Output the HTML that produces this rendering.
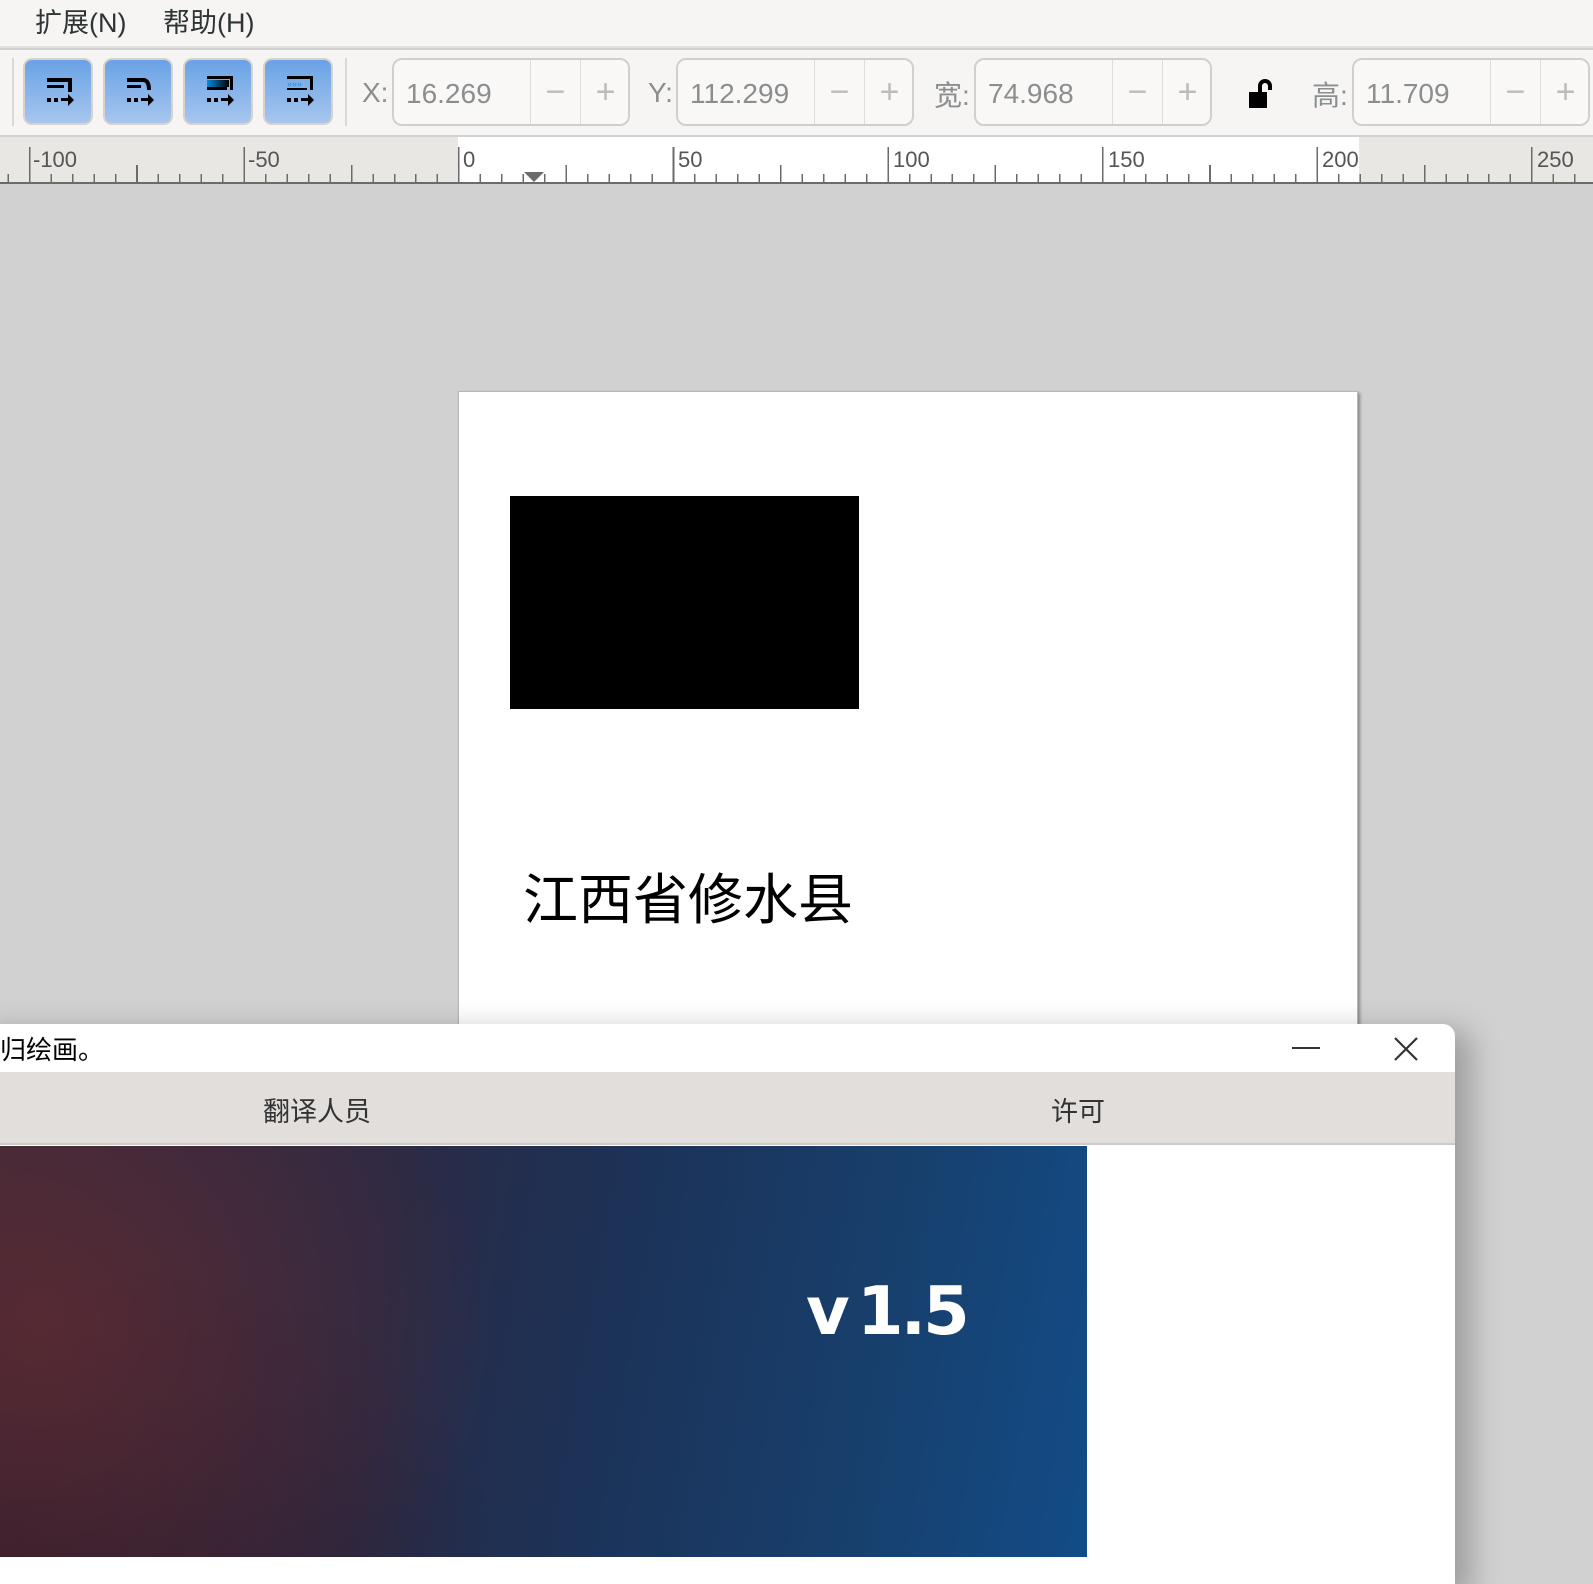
<!DOCTYPE html>
<html><head><meta charset="utf-8"><style>
*{margin:0;padding:0;box-sizing:border-box}
body{width:1593px;height:1557px;overflow:hidden;background:#d1d1d1;position:relative;font-family:"Liberation Sans","Noto Sans CJK SC",sans-serif}
.abs{position:absolute}
#menu{left:0;top:0;width:1593px;height:48px;background:#f6f5f4;border-bottom:2px solid #e2e0dd;font-size:27px;color:#2e3436}
#menu span{position:absolute;top:1px}
#tb{left:0;top:50px;width:1593px;height:86px;background:#f6f5f4;border-bottom:1px solid #d5d2ce}
.btn{position:absolute;top:8px;width:70px;height:67px;border-radius:9px;border:2px solid #d8d2cc;background:linear-gradient(#6aa2e6,#a6c6ee)}
.lbl{position:absolute;top:27px;font-size:28px;color:#8b8e8f}
.spin{position:absolute;top:8px;height:68px;border:2px solid #d3cec9;border-radius:10px;background:#f9f8f7}
.spin .v{position:absolute;left:12px;top:18px;font-size:28px;color:#8b8e8f}
.spin .m,.spin .p{position:absolute;top:0;width:50px;height:64px;border-left:1px solid #e0ddd9;color:#bbb;font-size:34px;text-align:center;line-height:64px}
.sep{position:absolute;top:8px;width:2px;height:68px;background:#dcd9d5}
#ruler{left:0;top:137px;width:1593px;height:47px;background:linear-gradient(90deg,#e8e7e4 0,#e8e7e4 458px,#fff 458px,#fff 1359px,#e8e7e4 1359px);border-bottom:2px solid #6b6b6b}
.rn{position:absolute;top:10px;font-size:22px;color:#555}
</style></head><body>
<div id="menu" class="abs"><span style="left:35px">扩展(N)</span><span style="left:163px">帮助(H)</span></div>
<div id="tb" class="abs">
<div class="sep" style="left:12px"></div>
<div class="btn" style="left:23px"></div><div class="btn" style="left:103px"></div><div class="btn" style="left:183px"></div><div class="btn" style="left:263px"></div>
<svg class="abs" style="left:23px;top:8px" width="320" height="70">
<g fill="#000">
<rect x="24" y="20" width="25" height="4"/><rect x="45" y="20" width="4" height="14"/><rect x="24" y="27" width="17" height="3"/>
<rect x="24" y="40" width="4" height="4"/><rect x="31" y="40" width="4" height="4"/><rect x="38" y="40" width="8" height="3"/><path d="M45 36 L51 42 L45 48Z"/>
<rect x="104" y="20" width="18" height="4"/><path d="M120 20 q8 0 8 12 h-4 q0-8-4-8z"/><rect x="104" y="27" width="14" height="3"/>
<rect x="104" y="40" width="4" height="4"/><rect x="111" y="40" width="4" height="4"/><rect x="118" y="40" width="8" height="3"/><path d="M125 36 L131 42 L125 48Z"/>
<rect x="184" y="18" width="26" height="3"/><rect x="207" y="18" width="3" height="14"/><rect x="184" y="29" width="20" height="3"/>
<rect x="184" y="40" width="4" height="4"/><rect x="191" y="40" width="4" height="4"/><rect x="198" y="40" width="8" height="3"/><path d="M205 36 L211 42 L205 48Z"/>
<rect x="264" y="18" width="26" height="3"/><rect x="287" y="18" width="3" height="14"/><rect x="264" y="30" width="20" height="2"/>
<rect x="264" y="40" width="4" height="4"/><rect x="271" y="40" width="4" height="4"/><rect x="278" y="40" width="8" height="3"/><path d="M285 36 L291 42 L285 48Z"/>
</g>
<defs><linearGradient id="g1"><stop offset="0" stop-color="#0a8ae0"/><stop offset="1" stop-color="#000"/></linearGradient></defs>
<rect x="184" y="22" width="22" height="7" fill="url(#g1)"/>
<text x="264" y="29" font-size="9" fill="#1a8ee8" font-family="Liberation Sans">»»»</text>
</svg>
<div class="sep" style="left:345px"></div>
<span class="lbl" style="left:362px">X:</span>
<div class="spin" style="left:392px;width:238px"><span class="v">16.269</span><span class="m" style="left:136px">−</span><span class="p" style="left:186px">+</span></div>
<span class="lbl" style="left:648px">Y:</span>
<div class="spin" style="left:676px;width:238px"><span class="v">112.299</span><span class="m" style="left:136px">−</span><span class="p" style="left:186px">+</span></div>
<span class="lbl" style="left:934px;top:24px">宽:</span>
<div class="spin" style="left:974px;width:238px"><span class="v">74.968</span><span class="m" style="left:136px">−</span><span class="p" style="left:186px">+</span></div>
<svg class="abs" style="left:1247px;top:28px" width="30" height="32"><path d="M2 14h18v16H2z" fill="#000"/><path d="M13 14V8a5 5 0 0 1 10 0v4" stroke="#000" stroke-width="4" fill="none"/></svg>
<span class="lbl" style="left:1312px;top:24px">高:</span>
<div class="spin" style="left:1352px;width:238px"><span class="v">11.709</span><span class="m" style="left:136px">−</span><span class="p" style="left:186px">+</span></div>
</div>
<div id="ruler" class="abs">
<div class="abs" style="left:0;bottom:0;width:1593px;height:8px;background:repeating-linear-gradient(90deg,transparent 0,transparent 7.5px,#6b6b6b 7.5px,#6b6b6b 9px,transparent 9px,transparent 21.46px)"></div>
<div class="abs" style="left:0;bottom:0;width:1593px;height:17px;background:repeating-linear-gradient(90deg,transparent 0,transparent 28.9px,#6b6b6b 28.9px,#6b6b6b 30.5px,transparent 30.5px,transparent 107.3px)"></div>
<div class="abs" style="left:0;bottom:0;width:1593px;height:35px;background:repeating-linear-gradient(90deg,transparent 0,transparent 28.9px,#6b6b6b 28.9px,#6b6b6b 30.5px,transparent 30.5px,transparent 214.6px)"></div>
<span class="rn" style="left:33px">-100</span><span class="rn" style="left:248px">-50</span><span class="rn" style="left:463px">0</span><span class="rn" style="left:678px">50</span><span class="rn" style="left:893px">100</span><span class="rn" style="left:1108px">150</span><span class="rn" style="left:1322px">200</span><span class="rn" style="left:1537px">250</span>
<svg class="abs" style="left:524px;bottom:0" width="22" height="10"><path d="M0 0h20L10 10z" fill="#6b6b6b"/></svg>
</div>
<div class="abs" style="left:458px;top:391px;width:900px;height:700px;background:#fff;box-shadow:2px 2px 3px rgba(0,0,0,.35);border:1px solid #b8b8b8"></div>
<div class="abs" style="left:510px;top:496px;width:349px;height:213px;background:#000"></div>
<div class="abs" style="left:523px;top:864px;font-size:55px;color:#000;font-family:'Noto Sans CJK SC',sans-serif;line-height:62px">江西省修水县</div>
<div class="abs" style="left:-20px;top:1024px;width:1475px;height:560px;background:#fff;border-radius:0 12px 0 0;box-shadow:12px 10px 30px 4px rgba(0,0,0,.25)"></div>
<div class="abs" style="left:0;top:1032px;font-size:26px;color:#000;font-family:'Noto Sans CJK SC',sans-serif;line-height:34px">归绘画。</div>
<div class="abs" style="left:1292px;top:1047px;width:28px;height:2px;background:#333"></div>
<svg class="abs" style="left:1393px;top:1036px" width="26" height="26"><path d="M2 2L24 24M24 2L2 24" stroke="#333" stroke-width="2.2"/></svg>
<div class="abs" style="left:0;top:1072px;width:1455px;height:73px;background:#e1dedb;border-bottom:2px solid #cfcac6"></div>
<div class="abs" style="left:263px;top:1090px;font-size:27px;color:#333;font-family:'Noto Sans CJK SC',sans-serif">翻译人员</div>
<div class="abs" style="left:1051px;top:1090px;font-size:27px;color:#333;font-family:'Noto Sans CJK SC',sans-serif">许可</div>
<div class="abs" style="left:0;top:1146px;width:1087px;height:411px;background:radial-gradient(ellipse 450px 400px at 40px 180px,rgba(90,42,50,.9),rgba(90,42,50,0)),radial-gradient(ellipse 500px 350px at 0 420px,rgba(45,25,40,.9),rgba(45,25,40,0)),linear-gradient(100deg,#3a2a3c 0%,#2a2a45 35%,#1c3257 55%,#17406e 80%,#124c87 100%)"></div>
<div class="abs" style="left:806px;top:1272px;font-size:67px;font-weight:900;color:#fff;font-family:'DejaVu Sans',sans-serif;letter-spacing:-3px;word-spacing:-10px">v 1.5</div>
</body></html>
